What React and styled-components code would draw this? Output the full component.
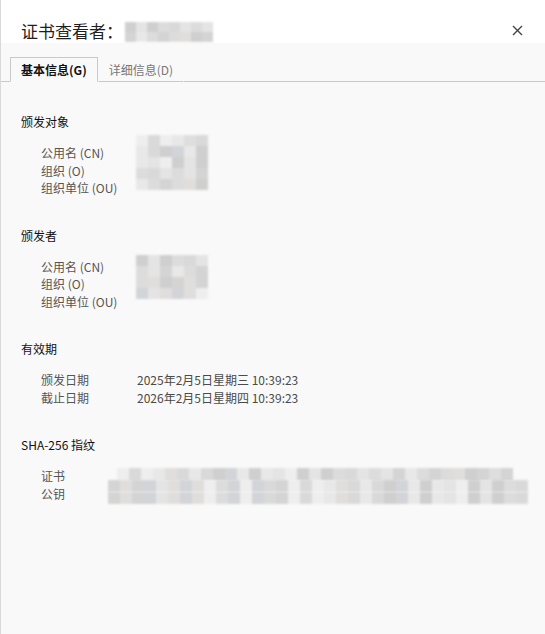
import { Fragment } from "react";
import styled, { createGlobalStyle } from "styled-components";

const GlobalStyle = createGlobalStyle`
  html, body {
    margin: 0;
    padding: 0;
    background: #f9f9f9;
  }
  body {
    font-family: "Noto Sans CJK SC", "Noto Sans", sans-serif;
  }
`;

const Window = styled.div`
  width: 545px;
  height: 634px;
  box-sizing: border-box;
  border-left: 1px solid #d9d9d9;
  background: #f9f9f9;
  display: flex;
  flex-direction: column;
  overflow: hidden;
`;

const Header = styled.div`
  height: 43px;
  box-sizing: border-box;
  background: #ffffff;
  display: flex;
  align-items: flex-end;
  justify-content: space-between;
  padding: 0 22px 0 20px;
`;

const Title = styled.div`
  display: flex;
  align-items: center;
  font-size: 17px;
  line-height: 24px;
  color: #1f1f1f;
`;

const CloseButton = styled.button`
  border: none;
  background: transparent;
  padding: 0;
  width: 12px;
  height: 12px;
  margin-bottom: 7px;
  display: flex;
  align-items: center;
  justify-content: center;
  cursor: pointer;
`;

const TabBar = styled.div`
  display: flex;
  align-items: flex-end;
  margin-top: 14px;
  padding-left: 9px;
  border-bottom: 1px solid #c9c9c9;
`;

const Tab = styled.div`
  height: 25px;
  box-sizing: border-box;
  padding: 0 10px;
  display: flex;
  align-items: center;
  font-size: 12px;
  margin-bottom: -1px;
  color: ${({ $active }) => ($active ? "#111" : "#777")};
  font-weight: ${({ $active }) => ($active ? 700 : 400)};
  border: 1px solid ${({ $active }) => ($active ? "#c9c9c9" : "transparent")};
  border-bottom: 1px solid ${({ $active }) => ($active ? "#f9f9f9" : "#c9c9c9")};
  background: #f9f9f9;
`;

const Content = styled.div`
  padding: 31px 0 0 20px;
  display: flex;
  flex-direction: column;
  gap: 30px;
`;

const Section = styled.div`
  display: flex;
  flex-direction: column;
  gap: 13px;
`;

const Heading = styled.div`
  font-size: 12px;
  line-height: 18px;
  color: #111;
`;

const Rows = styled.div`
  position: relative;
  display: grid;
  grid-template-columns: ${({ $labelWidth }) => $labelWidth}px 1fr;
  padding-left: 20px;
`;

const Label = styled.div`
  font-size: 12px;
  line-height: 17.5px;
  color: #555;
  white-space: nowrap;
`;

const Value = styled.div`
  font-size: 12px;
  line-height: 17.5px;
  color: #4a4a4a;
  white-space: nowrap;
`;

const MosaicGrid = styled.div`
  position: absolute;
  left: ${({ $left }) => $left}px;
  top: ${({ $top }) => $top}px;
  display: grid;
  grid-template-columns: repeat(${({ $cols }) => $cols}, ${({ $cell }) => $cell}px);
  grid-auto-rows: ${({ $cellH }) => $cellH}px;
  filter: blur(1.2px);
`;

const Cell = styled.div`
  background: ${({ $c }) => $c};
`;

const TitleMosaic = styled.div`
  position: relative;
  width: 96px;
  height: 20px;
  margin-left: 2px;
`;

const shades = ["#d4d4d4", "#dcdcdc", "#e4e4e4", "#cfcfcf", "#e8e8e8", "#d9d9d9", "#eeeeee", "#d2d4d8", "#e0dedc"];

const Mosaic = ({ left, top, cols, rows, cell, cellH, seed }) => {
  const cells = [];
  for (let i = 0; i < cols * rows; i++) {
    cells.push(shades[(i * 7 + seed * 3 + ((i * i) % 5)) % shades.length]);
  }
  return (
    <MosaicGrid $left={left} $top={top} $cols={cols} $cell={cell} $cellH={cellH || cell}>
      {cells.map((c, i) => (
        <Cell key={i} $c={c} />
      ))}
    </MosaicGrid>
  );
};

const subject = ["公用名 (CN)", "组织 (O)", "组织单位 (OU)"];

const NameRows = ({ mosaicTop, mosaicRows, seed }) => (
  <Rows $labelWidth={96}>
    {subject.map((s) => (
      <Fragment key={s}>
        <Label>{s}</Label>
        <Value />
      </Fragment>
    ))}
    <Mosaic left={115} top={mosaicTop} cols={6} rows={mosaicRows} cell={12} cellH={11} seed={seed} />
  </Rows>
);

const App = () => {
  return (
    <Window>
      <GlobalStyle />
      <Header>
        <Title>
          证书查看者：
          <TitleMosaic>
            <Mosaic left={0} top={1} cols={8} rows={2} cell={11} cellH={10} seed={1} />
          </TitleMosaic>
        </Title>
        <CloseButton aria-label="关闭">
          <svg width="11" height="11" viewBox="0 0 11 11">
            <path d="M1 1L10 10M10 1L1 10" stroke="#444" strokeWidth="1.4" />
          </svg>
        </CloseButton>
      </Header>

      <TabBar>
        <Tab $active>基本信息(G)</Tab>
        <Tab>详细信息(D)</Tab>
      </TabBar>

      <Content>
        <Section>
          <Heading>颁发对象</Heading>
          <NameRows mosaicTop={-9} mosaicRows={5} seed={2} />
        </Section>

        <Section>
          <Heading>颁发者</Heading>
          <NameRows mosaicTop={-3} mosaicRows={4} seed={4} />
        </Section>

        <Section>
          <Heading>有效期</Heading>
          <Rows $labelWidth={96}>
            <Label>颁发日期</Label>
            <Value>2025年2月5日星期三 10:39:23</Value>
            <Label>截止日期</Label>
            <Value>2026年2月5日星期四 10:39:23</Value>
          </Rows>
        </Section>

        <Section>
          <Heading>SHA-256 指纹</Heading>
          <Rows $labelWidth={72}>
            <Label>证书</Label>
            <Value />
            <Label>公钥</Label>
            <Value />
            <Mosaic left={96} top={1} cols={33} rows={1} cell={12} cellH={13} seed={5} />
            <Mosaic left={87} top={13} cols={35} rows={1} cell={12} cellH={12} seed={3} />
            <Mosaic left={87} top={25} cols={35} rows={1} cell={12} cellH={12} seed={6} />
          </Rows>
        </Section>
      </Content>
    </Window>
  );
};

export default App;
